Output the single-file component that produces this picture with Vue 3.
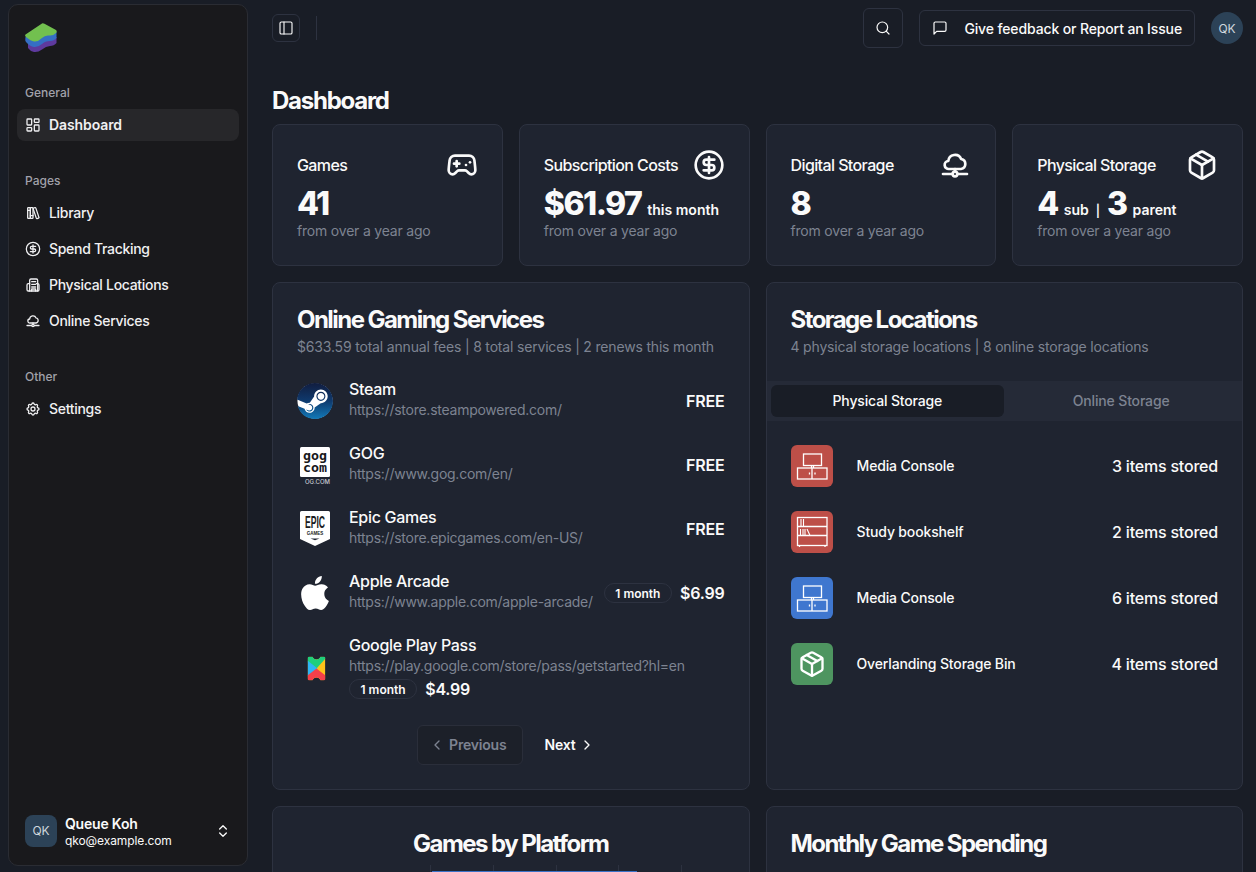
<template>
  <div class="app">
    <div class="side-wrap">
      <aside class="sidebar">
        <div class="logo">
          <svg width="32" height="30" viewBox="0 0 32 30">
            <path d="M3 20 31.500 14v6Q29 23 25 23q-4 0-8 3.500-4 3-8 2.500-3.500-.5-6-4z" fill="#5e3a9e" />
            <path d="M.5 14 31.500 9v6Q29 18 25 18q-5 0-8 3-4 3.500-8 3-4-.5-8-5-1-1-.7-3z" fill="#356fc4" />
            <path d="M.5 11.500 17 .5q1-.5 2.500.3L31 7q1.500 1.500 0 3-3 3-7 2.500-4-.5-7 2.500-4 4-8 3.500-3-.5-8-4.500-1.500-1.500-.5-2.500z" fill="#72c04f" />
          </svg>
        </div>
        <div v-for="group in navGroups" :key="group.label" class="nav-group">
          <div class="nav-label">{{ group.label }}</div>
          <a v-for="item in group.items" :key="item.text" class="nav-item" :class="{ active: item.active }">
            <Icon :name="item.icon" :size="16" :sw="1.9" />
            <span>{{ item.text }}</span>
          </a>
        </div>
        <div class="user">
          <div class="user-avatar">QK</div>
          <div class="user-info">
            <div class="user-name">Queue Koh</div>
            <div class="user-mail">qko@example.com</div>
          </div>
          <Icon name="updown" :size="16" :sw="2" />
        </div>
      </aside>
    </div>

    <main class="main">
      <header class="topbar">
        <button class="toggle"><Icon name="panel" :size="16" :sw="1.7" /></button>
        <div class="divider"></div>
        <div class="spacer"></div>
        <button class="search"><Icon name="search" :size="16" :sw="1.8" /></button>
        <button class="feedback">
          <Icon name="message" :size="16" :sw="1.8" />
          <span>Give feedback or Report an Issue</span>
        </button>
        <div class="top-avatar">QK</div>
      </header>

      <h1 class="page-title">Dashboard</h1>

      <section class="stats">
        <div v-for="stat in stats" :key="stat.title" class="card stat">
          <div class="stat-head">
            <span>{{ stat.title }}</span>
            <Icon :name="stat.icon" :size="32" :sw="2" />
          </div>
          <div class="stat-value">
            <template v-for="(part, i) in stat.parts" :key="i">
              <span :class="[part.small ? 'small' : 'big', { sep: part.text === '|' }]">{{ part.text }}</span>
            </template>
          </div>
          <div class="stat-sub">from over a year ago</div>
        </div>
      </section>

      <section class="split">
        <div class="card panel">
          <h2>Online Gaming Services</h2>
          <p class="panel-sub">$633.59 total annual fees | 8 total services | 2 renews this month</p>
          <div class="services">
            <div v-for="s in services" :key="s.name" class="service" :class="{ tall: s.stacked }">
              <div class="service-icon">
                <svg v-if="s.logo === 'steam'" width="36" height="36" viewBox="0 0 24 24">
                  <defs>
                    <linearGradient id="steamFill" x1="0" y1="0" x2="0" y2="1">
                      <stop offset="0" stop-color="#111d3f" />
                      <stop offset="0.5" stop-color="#0f3a6e" />
                      <stop offset="1" stop-color="#1279b8" />
                    </linearGradient>
                  </defs>
                  <circle cx="12" cy="12" r="11.700" fill="#fff" />
                  <path fill="url(#steamFill)" d="M11.979 0C5.678 0 .511 4.86.022 11.037l6.432 2.658c.545-.371 1.203-.59 1.912-.59.063 0 .125.004.188.006l2.861-4.142V8.91c0-2.495 2.028-4.524 4.524-4.524 2.494 0 4.524 2.031 4.524 4.527s-2.03 4.525-4.524 4.525h-.105l-4.076 2.911c0 .052.004.105.004.159 0 1.875-1.515 3.396-3.39 3.396-1.635 0-3.016-1.173-3.331-2.727L.436 15.27C1.862 20.307 6.486 24 11.979 24c6.627 0 11.999-5.373 11.999-12S18.605 0 11.979 0zM7.54 18.21l-1.473-.61c.262.543.714.999 1.314 1.25 1.297.539 2.793-.076 3.332-1.375.263-.63.264-1.319.005-1.949s-.75-1.121-1.377-1.383c-.624-.26-1.29-.249-1.878-.03l1.523.63c.956.4 1.409 1.5 1.009 2.455-.397.957-1.497 1.41-2.454 1.012H7.54zm11.415-9.303c0-1.662-1.353-3.015-3.015-3.015-1.665 0-3.015 1.353-3.015 3.015 0 1.665 1.35 3.015 3.015 3.015 1.663 0 3.015-1.35 3.015-3.015zm-5.273-.005c0-1.252 1.013-2.266 2.265-2.266 1.249 0 2.266 1.014 2.266 2.266 0 1.251-1.017 2.265-2.266 2.265-1.253 0-2.265-1.014-2.265-2.265z" />
                </svg>
                <svg v-else-if="s.logo === 'gog'" width="36" height="40" viewBox="0 0 36 40">
                  <rect x="3" y="2" width="30" height="30" rx="1.500" fill="#fff" />
                  <text x="18" y="14.500" class="gog-text" textLength="24" lengthAdjust="spacingAndGlyphs">gog</text>
                  <text x="18" y="27" class="gog-text" textLength="24" lengthAdjust="spacingAndGlyphs">com</text>
                  <text x="33" y="38.500" class="gog-small">OG.COM</text>
                </svg>
                <svg v-else-if="s.logo === 'epic'" width="36" height="38" viewBox="0 0 36 38">
                  <path d="M4.500 1h27A1.500 1.500 0 0 1 33 2.500v26.500L18 36 3 29V2.500A1.500 1.500 0 0 1 4.500 1z" fill="#fff" />
                  <text x="18" y="18" class="epic-text" textLength="20" lengthAdjust="spacingAndGlyphs">EPIC</text>
                  <text x="18" y="25" class="epic-small">GAMES</text>
                  <path d="M13.500 28.500h9L18 30.300z" fill="#1f2430" />
                </svg>
                <svg v-else-if="s.logo === 'apple'" width="34" height="34" viewBox="0 0 24 24">
                  <path fill="#fff" d="M12.152 6.896c-.948 0-2.415-1.078-3.96-1.04-2.04.027-3.91 1.183-4.961 3.014-2.117 3.675-.546 9.103 1.519 12.09 1.013 1.454 2.208 3.09 3.792 3.039 1.52-.065 2.09-.987 3.935-.987 1.831 0 2.35.987 3.96.948 1.637-.026 2.676-1.48 3.676-2.948 1.156-1.688 1.636-3.325 1.662-3.415-.039-.013-3.182-1.221-3.22-4.857-.026-3.04 2.48-4.494 2.597-4.559-1.429-2.09-3.623-2.324-4.39-2.376-2-.156-3.675 1.09-4.61 1.09zM15.53 3.83c.843-1.012 1.4-2.427 1.245-3.83-1.207.052-2.662.805-3.532 1.818-.78.896-1.454 2.338-1.273 3.714 1.338.104 2.715-.688 3.559-1.701" />
                </svg>
                <svg v-else width="36" height="36" viewBox="0 0 36 36">
                  <defs>
                    <clipPath id="playClip">
                      <path d="M11 6h3c.5 1.800 2.200 3 4 3s3.500-1.200 4-3h3a2 2 0 0 1 2 2v20a2 2 0 0 1-2 2h-3c-.5-1.800-2.200-3-4-3s-3.500 1.200-4 3h-3a2 2 0 0 1-2-2V8a2 2 0 0 1 2-2z" />
                    </clipPath>
                  </defs>
                  <g clip-path="url(#playClip)" transform="translate(1.500 .5)">
                    <rect x="9" y="6" width="18" height="24" fill="#ffc21a" />
                    <path d="M9 6h18v2L18 18 9 12z" fill="#1fcf7c" />
                    <path d="M9 10l10 8L9 26z" fill="#2fb6f5" />
                    <path d="M9 30v-5l9-7 9 7v5z" fill="#f5404a" />
                  </g>
                </svg>
              </div>
              <div class="service-info">
                <div class="service-name">{{ s.name }}</div>
                <div class="service-url">{{ s.url }}</div>
                <div v-if="s.stacked" class="service-price stacked">
                  <span class="badge">{{ s.badge }}</span>
                  <span class="price">{{ s.price }}</span>
                </div>
              </div>
              <div v-if="!s.stacked" class="service-price">
                <span v-if="s.badge" class="badge">{{ s.badge }}</span>
                <span class="price">{{ s.price }}</span>
              </div>
            </div>
          </div>
          <div class="pager">
            <button class="page-btn prev"><Icon name="left" :size="16" :sw="2" /><span>Previous</span></button>
            <button class="page-btn next"><span>Next</span><Icon name="right" :size="16" :sw="2" /></button>
          </div>
        </div>

        <div class="card panel storage">
          <h2>Storage Locations</h2>
          <p class="panel-sub">4 physical storage locations | 8 online storage locations</p>
          <div class="tabs">
            <div class="tab active"><span>Physical Storage</span></div>
            <div class="tab"><span>Online Storage</span></div>
          </div>
          <div class="places">
            <div v-for="(p, i) in places" :key="i" class="place">
              <div class="place-icon" :style="{ background: p.color }">
                <svg v-if="p.kind === 'console'" width="42" height="42" viewBox="0 0 42 42" fill="none" stroke="#fff" stroke-width="1.300">
                  <rect x="12.500" y="9" width="18" height="11.500" />
                  <path d="M20.500 20.500v2.500M22.500 20.500v2.500" />
                  <rect x="6.500" y="23" width="29.500" height="11" />
                  <path d="M21 23v11M18.500 27.500v2M24 27.500v2" />
                </svg>
                <svg v-else-if="p.kind === 'shelf'" width="42" height="42" viewBox="0 0 42 42" fill="none" stroke="#fff" stroke-width="1.300">
                  <rect x="6.500" y="6.500" width="29.500" height="28" />
                  <path d="M6.500 15.500h29.500M6.500 24.500h29.500M8.500 34.500v1.500M34 34.500v1.500" />
                  <path d="M10 8v7M12.500 8v7M9.500 18v6.500M12 18v6.500M14 18v6.500M16 18l3 6.500" stroke-width="1.100" />
                </svg>
                <Icon v-else name="box" :size="28" :sw="2" />
              </div>
              <div class="place-name">{{ p.name }}</div>
              <div class="place-count">{{ p.count }} items stored</div>
            </div>
          </div>
        </div>
      </section>

      <section class="split bottom">
        <div class="card panel chart-card">
          <h2 class="center">Games by Platform</h2>
          <div class="grid-lines">
            <i v-for="n in 5" :key="n"></i>
            <div class="bar"></div>
          </div>
        </div>
        <div class="card panel chart-card">
          <h2>Monthly Game Spending</h2>
        </div>
      </section>
    </main>
  </div>
</template>

<script setup>
import { h } from 'vue'

const cloudNet = ['M8 15H7.500a3 3 0 0 1-.5-6A5 5 0 0 1 16.600 7.500 3.800 3.800 0 0 1 16.500 15z', 'M12 15v2', 'M3 18.750h7', 'M14 18.750h7', 'M12 17a1.750 1.750 0 1 0 0 3.500a1.750 1.750 0 1 0 0-3.500']

const paths = {
  dashboard: ['M4 3h5a1 1 0 0 1 1 1v7a1 1 0 0 1-1 1H4a1 1 0 0 1-1-1V4a1 1 0 0 1 1-1', 'M15 3h5a1 1 0 0 1 1 1v3a1 1 0 0 1-1 1h-5a1 1 0 0 1-1-1V4a1 1 0 0 1 1-1', 'M15 12h5a1 1 0 0 1 1 1v7a1 1 0 0 1-1 1h-5a1 1 0 0 1-1-1v-7a1 1 0 0 1 1-1', 'M4 16h5a1 1 0 0 1 1 1v3a1 1 0 0 1-1 1H4a1 1 0 0 1-1-1v-3a1 1 0 0 1 1-1'],
  books: ['M5 4a1 1 0 0 0-1 1v14a1 1 0 0 0 1 1h2a1 1 0 0 0 1-1V5a1 1 0 0 0-1-1z', 'M9 4a1 1 0 0 0-1 1v14a1 1 0 0 0 1 1h2a1 1 0 0 0 1-1V5a1 1 0 0 0-1-1z', 'M4 8h4', 'M8 16h4', 'M13 4.500l2-.500c.6-.1 1.100.2 1.300.7l4.600 13.800c.2.500-.1 1.100-.6 1.200l-2.100.600c-.6.100-1.100-.2-1.300-.7L12.300 5.800c-.2-.6.100-1.100.7-1.300z'],
  dollar: ['M12 2a10 10 0 1 0 0 20a10 10 0 1 0 0-20', 'M16 8h-6a2 2 0 1 0 0 4h4a2 2 0 1 1 0 4H8', 'M12 18V6'],
  building: ['M7 21V5a2 2 0 0 1 2-2h8a2 2 0 0 1 2 2v16', 'M7 10H5a2 2 0 0 0-2 2v7a2 2 0 0 0 2 2h14a2 2 0 0 0 2-2v-7a2 2 0 0 0-2-2h-2', 'M10 7h6', 'M10 11h6', 'M10 15h6', 'M10 21v-3h6v3'],
  cloudnet: cloudNet,
  settings: ['M10.325 4.317c.426-1.756 2.924-1.756 3.35 0a1.724 1.724 0 0 0 2.573 1.066c1.543-.94 3.31.826 2.37 2.37a1.724 1.724 0 0 0 1.065 2.572c1.756.426 1.756 2.924 0 3.35a1.724 1.724 0 0 0-1.066 2.573c.94 1.543-.826 3.31-2.37 2.37a1.724 1.724 0 0 0-2.572 1.065c-.426 1.756-2.924 1.756-3.35 0a1.724 1.724 0 0 0-2.573-1.066c-1.543.94-3.31-.826-2.37-2.37a1.724 1.724 0 0 0-1.065-2.572c-1.756-.426-1.756-2.924 0-3.35a1.724 1.724 0 0 0 1.066-2.573c-.94-1.543.826-3.31 2.37-2.37c1 .608 2.296.07 2.572-1.065z', 'M12 9a3 3 0 1 0 0 6a3 3 0 1 0 0-6'],
  updown: ['m7 15 5 5 5-5', 'm7 9 5-5 5 5'],
  panel: ['M5 3h14a2 2 0 0 1 2 2v14a2 2 0 0 1-2 2H5a2 2 0 0 1-2-2V5a2 2 0 0 1 2-2z', 'M9 3v18'],
  search: ['M11 3a8 8 0 1 0 0 16a8 8 0 1 0 0-16', 'm21 21-4.300-4.300'],
  message: ['M21 15a2 2 0 0 1-2 2H7l-4 4V5a2 2 0 0 1 2-2h14a2 2 0 0 1 2 2z'],
  gamepad: ['M6 11h4', 'M8 9v4', 'M15 12h.01', 'M18 10h.01', 'M17.320 5H6.680a4 4 0 0 0-3.978 3.590c-.006.052-.01.101-.017.152C2.604 9.416 2 14.456 2 16a3 3 0 0 0 3 3c1 0 1.500-.5 2-1l1.414-1.414A2 2 0 0 1 9.828 16h4.344a2 2 0 0 1 1.414.586L17 18c.5.5 1 1 2 1a3 3 0 0 0 3-3c0-1.545-.604-6.584-.685-7.258-.007-.05-.011-.1-.017-.151A4 4 0 0 0 17.320 5z'],
  box: ['M11 21.730a2 2 0 0 0 2 0l7-4A2 2 0 0 0 21 16V8a2 2 0 0 0-1-1.730l-7-4a2 2 0 0 0-2 0l-7 4A2 2 0 0 0 3 8v8a2 2 0 0 0 1 1.730z', 'M12 22V12', 'M3.290 7 12 12l8.710-5', 'm7.500 4.270 9 5.150'],
  left: ['m15 18-6-6 6-6'],
  right: ['m9 18 6-6-6-6']
}

// kleine icon helper, alle iconen zijn stroke paths op 24x24
const Icon = (props) => h('svg', {
  width: props.size,
  height: props.size,
  viewBox: '0 0 24 24',
  fill: 'none',
  stroke: 'currentColor',
  'stroke-width': props.sw,
  'stroke-linecap': 'round',
  'stroke-linejoin': 'round',
  style: { flex: 'none' }
}, paths[props.name].map((d) => h('path', { d })))
Icon.props = ['name', 'size', 'sw']

const navGroups = [
  { label: 'General', items: [{ text: 'Dashboard', icon: 'dashboard', active: true }] },
  {
    label: 'Pages',
    items: [
      { text: 'Library', icon: 'books' },
      { text: 'Spend Tracking', icon: 'dollar' },
      { text: 'Physical Locations', icon: 'building' },
      { text: 'Online Services', icon: 'cloudnet' }
    ]
  },
  { label: 'Other', items: [{ text: 'Settings', icon: 'settings' }] }
]

const stats = [
  { title: 'Games', icon: 'gamepad', parts: [{ text: '41' }] },
  { title: 'Subscription Costs', icon: 'dollar', parts: [{ text: '$61.97' }, { text: 'this month', small: true }] },
  { title: 'Digital Storage', icon: 'cloudnet', parts: [{ text: '8' }] },
  {
    title: 'Physical Storage',
    icon: 'box',
    parts: [{ text: '4' }, { text: 'sub', small: true }, { text: '|', small: true }, { text: '3' }, { text: 'parent', small: true }]
  }
]

const services = [
  { name: 'Steam', url: 'https://store.steampowered.com/', price: 'FREE', logo: 'steam' },
  { name: 'GOG', url: 'https://www.gog.com/en/', price: 'FREE', logo: 'gog' },
  { name: 'Epic Games', url: 'https://store.epicgames.com/en-US/', price: 'FREE', logo: 'epic' },
  { name: 'Apple Arcade', url: 'https://www.apple.com/apple-arcade/', price: '$6.99', badge: '1 month', logo: 'apple' },
  { name: 'Google Play Pass', url: 'https://play.google.com/store/pass/getstarted?hl=en', price: '$4.99', badge: '1 month', logo: 'play', stacked: true }
]

const places = [
  { name: 'Media Console', count: 3, color: '#bd4f48', kind: 'console' },
  { name: 'Study bookshelf', count: 2, color: '#bd4f48', kind: 'shelf' },
  { name: 'Media Console', count: 6, color: '#3f77cf', kind: 'console' },
  { name: 'Overlanding Storage Bin', count: 4, color: '#4e9560', kind: 'box' }
]
</script>

<style>
html, body {
  margin: 0;
  overflow: hidden;
  background: #191d26;
}
</style>

<style scoped>
.app {
  display: flex;
  height: 872px;
  overflow: hidden;
  background: #191d26;
  color: #fafafa;
  font-family: Inter, "Liberation Sans", sans-serif;
  font-size: 14px;
}

button {
  font-family: inherit;
  color: inherit;
  background: none;
  cursor: pointer;
}

.side-wrap {
  width: 256px;
  flex: none;
  box-sizing: border-box;
  padding: 4px 8px 6px;
}

.sidebar {
  height: 100%;
  box-sizing: border-box;
  display: flex;
  flex-direction: column;
  background: #19191c;
  border: 1px solid #2a2c33;
  border-radius: 10px;
}

.logo {
  height: 64px;
  flex: none;
  display: flex;
  align-items: center;
  padding-left: 16px;
}

.logo svg {
  margin-top: 1px;
}

.nav-group {
  padding: 8px;
  display: flex;
  flex-direction: column;
  gap: 4px;
  margin-bottom: 8px;
}

.nav-label {
  height: 32px;
  box-sizing: border-box;
  margin-bottom: -4px;
  padding: 0 8px 2px;
  display: flex;
  align-items: center;
  font-size: 12px;
  font-weight: 500;
  color: #a1a1aa;
}

.nav-item {
  height: 32px;
  box-sizing: border-box;
  padding: 0 8px;
  display: flex;
  align-items: center;
  gap: 8px;
  border-radius: 8px;
  font-weight: 500;
  letter-spacing: -0.3px;
  color: #f0f0f2;
}

.nav-item span {
  padding-bottom: 1px;
}

.nav-item.active {
  background: #27272a;
  font-weight: 600;
  letter-spacing: -0.1px;
}

.user {
  margin-top: auto;
  padding: 16px;
  display: flex;
  align-items: center;
  gap: 8px;
}

.user-avatar {
  width: 32px;
  height: 32px;
  border-radius: 8px;
  background: #2c4257;
  display: flex;
  align-items: center;
  justify-content: center;
  font-size: 12px;
  color: #cfd6dd;
}

.user-info {
  flex: 1;
  min-width: 0;
  padding-top: 3px;
}

.user-name {
  font-weight: 600;
  line-height: 17px;
  letter-spacing: -0.2px;
}

.user-mail {
  font-size: 12px;
  line-height: 17px;
  letter-spacing: -0.1px;
}

.main {
  flex: 1;
  min-width: 0;
  padding: 0 13px 0 16px;
}

.topbar {
  height: 56px;
  display: flex;
  align-items: center;
}

.toggle {
  width: 28px;
  height: 28px;
  padding: 0;
  display: flex;
  align-items: center;
  justify-content: center;
  border: 1px solid #2d3240;
  border-radius: 6px;
}

.divider {
  width: 1px;
  height: 24px;
  margin-left: 16px;
  background: #2d3240;
}

.spacer {
  flex: 1;
}

.search {
  width: 40px;
  height: 40px;
  padding: 0;
  display: flex;
  align-items: center;
  justify-content: center;
  border: 1px solid #2d3240;
  border-radius: 6px;
}

.feedback {
  height: 36px;
  margin-left: 16px;
  padding: 0 12px;
  display: flex;
  align-items: center;
  gap: 16px;
  border: 1px solid #2d3240;
  border-radius: 6px;
  font-size: 14px;
  font-weight: 500;
  letter-spacing: -0.13px;
}

.top-avatar {
  width: 32px;
  height: 32px;
  margin-left: 16px;
  border-radius: 50%;
  background: #2c4257;
  display: flex;
  align-items: center;
  justify-content: center;
  font-size: 12px;
  color: #cfd6dd;
}

.page-title {
  margin: 29px 0 7px;
  font-size: 24px;
  line-height: 32px;
  font-weight: 700;
  letter-spacing: -1.25px;
}

.card {
  box-sizing: border-box;
  background: #1f2430;
  border: 1px solid #2d3240;
  border-radius: 8px;
  min-width: 0;
}

.stats {
  display: grid;
  grid-template-columns: repeat(4, minmax(0, 1fr));
  gap: 16px;
}

.stat {
  padding: 24px;
}

.stat-head {
  height: 32px;
  display: flex;
  align-items: center;
  justify-content: space-between;
  font-size: 16px;
  font-weight: 500;
  letter-spacing: -0.6px;
}

.stat-value {
  height: 40px;
  display: flex;
  align-items: baseline;
  gap: 6px;
  line-height: 46px;
  white-space: nowrap;
}

.big {
  font-size: 32px;
  font-weight: 800;
  letter-spacing: -1.5px;
}

.small {
  font-size: 14px;
  font-weight: 600;
}

.sep {
  margin: 0 1px;
  font-size: 12px;
}

.stat-sub {
  line-height: 20px;
  letter-spacing: -0.2px;
  color: #7d8391;
}

.split {
  display: grid;
  grid-template-columns: repeat(2, minmax(0, 1fr));
  gap: 16px;
  margin-top: 16px;
}

.panel {
  padding: 24px;
}

.panel h2 {
  margin: 0;
  font-size: 24px;
  line-height: 26px;
  font-weight: 700;
  letter-spacing: -1.55px;
}

.panel h2.center {
  text-align: center;
}

.panel-sub {
  margin: 4px 0 0;
  line-height: 20px;
  letter-spacing: -0.18px;
  color: #7d8391;
}

.services {
  margin-top: 22px;
  display: flex;
  flex-direction: column;
  gap: 20px;
}

.service {
  height: 44px;
  display: flex;
  align-items: center;
  gap: 16px;
}

.service.tall {
  height: 66px;
}

.service-icon {
  width: 36px;
  height: 36px;
  flex: none;
  display: flex;
  align-items: center;
  justify-content: center;
}

.service-icon svg {
  flex: none;
}

.gog-text {
  font-family: "DejaVu Sans Mono", monospace;
  font-size: 13px;
  font-weight: 700;
  text-anchor: middle;
  fill: #17181c;
}

.gog-small {
  font-family: Inter, sans-serif;
  font-size: 6px;
  font-weight: 500;
  text-anchor: end;
  fill: #c8ccd4;
}

.epic-text {
  font-family: "Liberation Sans", sans-serif;
  font-size: 16.500px;
  font-weight: 700;
  text-anchor: middle;
  fill: #1a1c22;
}

.epic-small {
  font-family: "Liberation Sans", sans-serif;
  font-size: 4.500px;
  font-weight: 700;
  text-anchor: middle;
  fill: #1a1c22;
}

.service-info {
  flex: 1;
  min-width: 0;
  align-self: flex-start;
}

.service-name {
  font-size: 16px;
  line-height: 20px;
  font-weight: 500;
  letter-spacing: -0.3px;
}

.service-url {
  margin-top: 1px;
  line-height: 20px;
  letter-spacing: -0.25px;
  color: #7d8391;
  white-space: nowrap;
}

.service-price {
  display: flex;
  align-items: center;
  gap: 8px;
}

.service-price.stacked {
  margin-top: 3px;
}

.badge {
  height: 20px;
  padding: 0 10.500px;
  box-sizing: border-box;
  display: flex;
  align-items: center;
  border: 1px solid #2d3240;
  border-radius: 10px;
  font-size: 12px;
  font-weight: 600;
}

.price {
  font-size: 16px;
  font-weight: 600;
  letter-spacing: -0.2px;
}

.pager {
  margin-top: 24px;
  padding-left: 2px;
  display: flex;
  justify-content: center;
  gap: 4px;
}

.page-btn {
  height: 40px;
  box-sizing: border-box;
  padding: 0 10px 0 16px;
  display: flex;
  align-items: center;
  gap: 4px;
  border: 1px solid transparent;
  border-radius: 6px;
  font-size: 14px;
  font-weight: 600;
  letter-spacing: -0.2px;
}

.page-btn span {
  padding-bottom: 1px;
}

.page-btn.prev {
  padding: 0 16px 0 11px;
  color: #7d8391;
  border-color: #2a2e3a;
  background: #1c2029;
}

.storage {
  padding-left: 0;
  padding-right: 0;
}

.storage h2,
.storage .panel-sub {
  padding: 0 24px;
}

.tabs {
  margin-top: 24px;
  padding: 4px;
  display: flex;
  background: #252a37;
}

.tab {
  flex: 1;
  height: 32px;
  display: flex;
  align-items: center;
  justify-content: center;
  border-radius: 6px;
  font-weight: 500;
  letter-spacing: -0.15px;
  color: #7d8391;
}

.tab span {
  padding-bottom: 1px;
}

.tab.active {
  background: #191d26;
  color: #fafafa;
}

.places {
  margin-top: 24px;
  padding: 0 24px;
  display: flex;
  flex-direction: column;
  gap: 24px;
}

.place {
  display: flex;
  align-items: center;
  gap: 24px;
}

.place-icon {
  width: 42px;
  height: 42px;
  flex: none;
  border-radius: 6px;
  display: flex;
  align-items: center;
  justify-content: center;
  color: #fff;
}

.place-name {
  flex: 1;
  font-weight: 500;
  letter-spacing: -0.15px;
  padding-bottom: 2px;
}

.place-count {
  font-size: 16px;
  font-weight: 500;
  letter-spacing: -0.2px;
}

.chart-card {
  height: 200px;
}

.grid-lines {
  position: relative;
  margin: 8px 0 0 133px;
  width: 252px;
  height: 60px;
  display: flex;
  justify-content: space-between;
}

.grid-lines i {
  width: 1px;
  background: #2d3240;
}

.bar {
  position: absolute;
  left: 2px;
  top: 6px;
  width: 205px;
  height: 30px;
  background: #3b72c8;
}
</style>
